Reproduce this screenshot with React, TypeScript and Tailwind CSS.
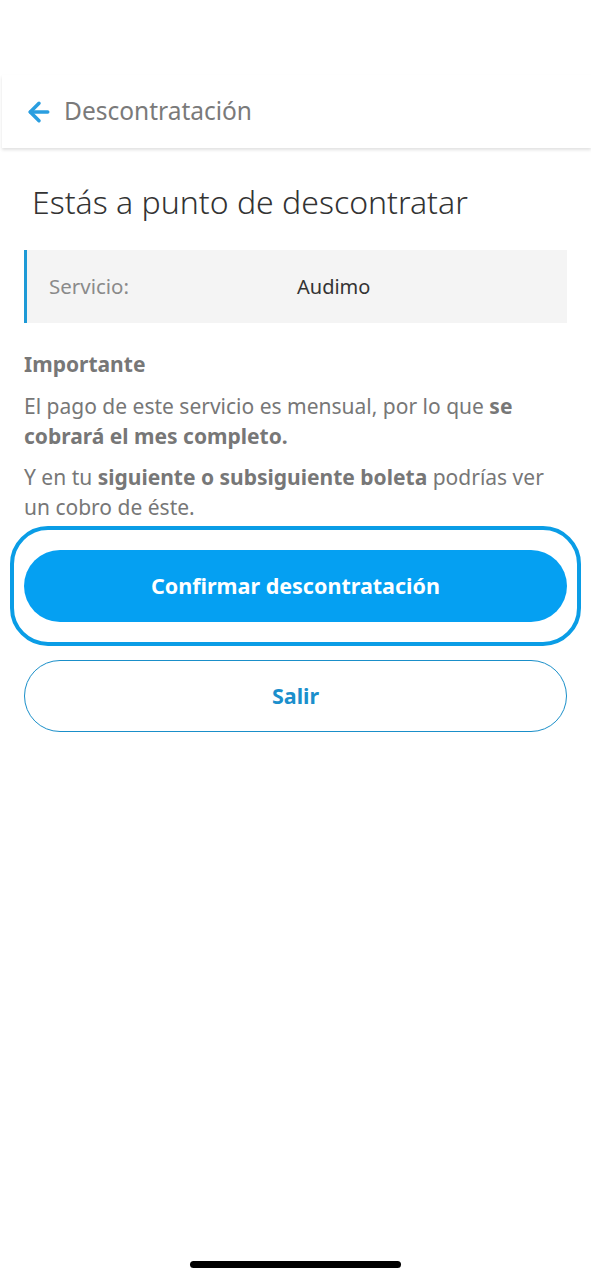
import { ArrowLeft } from 'lucide-react';

export default function App() {
    return (
        <div className="min-h-[1280px] w-full bg-white relative font-['Noto_Sans',sans-serif]">
            <div className="pt-[75px]">
                <div className="ml-[2px] h-[73px] bg-white flex items-center pl-[22px] shadow-[0_2px_3px_rgba(0,0,0,0.12)]">
                    <ArrowLeft className="h-[30px] w-[30px] text-[#2a9ee0]" strokeWidth={2.8} />
                    <span className="ml-[10px] text-[24.5px] text-[#7a7a7a]">Descontratación</span>
                </div>
            </div>

            <div className="px-[24px]">
                <h1 className="mt-[32px] ml-[8px] text-[32px] font-light text-[#333] leading-[44px]">
                    Estás a punto de descontratar
                </h1>

                <div className="mt-[26px] h-[73px] bg-[#f4f4f4] border-l-[3px] border-[#1e9ad6] flex items-center">
                    <span className="ml-[22px] w-[248px] text-[20.5px] text-[#8a8a8a]">Servicio:</span>
                    <span className="text-[20px] text-[#333]">Audimo</span>
                </div>

                <div className="mt-[26px] text-[#777]">
                    <p className="text-[21px] font-bold leading-[30px]">Importante</p>
                    <p className="mt-[12px] text-[21px] leading-[30px] pr-[8px]">
                        El pago de este servicio es mensual, por lo que <b>se cobrará el mes completo.</b>
                    </p>
                    <p className="mt-[11px] text-[21px] leading-[30px] pr-[8px]">
                        Y en tu <b>siguiente o subsiguiente boleta</b> podrías ver un cobro de éste.
                    </p>
                </div>
            </div>

            <div className="mt-[4px] mx-[10px] rounded-[38px] border-[4px] border-[#0a9de6] px-[10px] py-[20px]">
                <button className="w-full h-[72px] rounded-full bg-[#05a0f2] text-white text-[21.5px] font-bold">
                    Confirmar descontratación
                </button>
            </div>

            <div className="px-[24px] mt-[14px]">
                <button className="w-full h-[72px] rounded-full border border-[#1a8fc9] text-[#1b8fcc] text-[21.5px] font-bold bg-white">
                    Salir
                </button>
            </div>

            <div className="absolute left-[190px] top-[1261px] w-[211px] h-[7px] rounded-full bg-black" />
        </div>
    );
}
